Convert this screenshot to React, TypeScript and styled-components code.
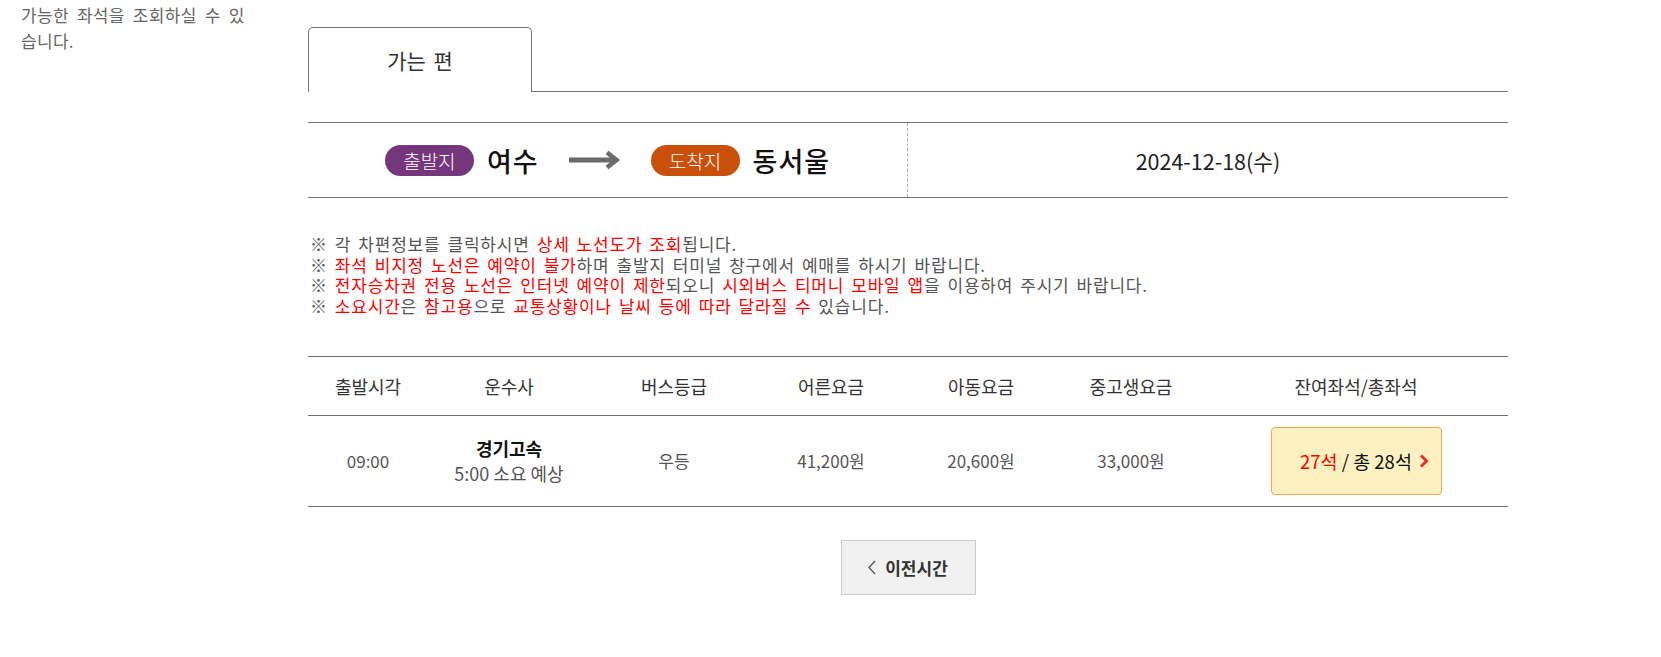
import styled, { createGlobalStyle } from 'styled-components'

const GlobalStyle = createGlobalStyle`
  body {
    margin: 0;
    background: #fff;
    font-family: 'Noto Sans CJK KR', 'Noto Sans', sans-serif;
    color: #333;
  }
`

const Page = styled.div`
  display: flex;
  align-items: flex-start;
`

const Sidebar = styled.div`
  width: 308px;
  flex: 0 0 308px;
  box-sizing: border-box;
  padding: 2px 0 0 21px;
  font-size: 17px;
  line-height: 26px;
  letter-spacing: 0.3px;
  word-spacing: 4px;
  color: #666;
`

const Main = styled.div`
  width: 1200px;
  padding-top: 27px;
`

const TabBar = styled.div`
  display: flex;
  border-bottom: 1px solid #777;
`

const Tab = styled.div`
  width: 224px;
  height: 65px;
  box-sizing: border-box;
  margin-bottom: -1px;
  border: 1px solid #777;
  border-bottom: none;
  border-radius: 5px 5px 0 0;
  background: #fff;
  display: flex;
  align-items: center;
  justify-content: center;
  font-size: 21px;
  color: #333;
  word-spacing: 3px;
`

const RouteBox = styled.div`
  margin-top: 30px;
  height: 76px;
  box-sizing: border-box;
  display: flex;
  border-top: 1px solid #777;
  border-bottom: 1px solid #777;
`

const RouteHalf = styled.div`
  flex: 0 0 599px;
  border-right: 1px dashed #aaa;
  display: flex;
  align-items: center;
  justify-content: center;
`

const DateHalf = styled.div`
  flex: 1;
  display: flex;
  align-items: center;
  justify-content: center;
  font-size: 21.5px;
  color: #222;
`

const Badge = styled.span<{ $color: string }>`
  width: 89px;
  height: 31px;
  border-radius: 16px;
  background: ${p => p.$color};
  color: #fff;
  font-size: 19px;
  font-weight: 300;
  display: flex;
  align-items: center;
  justify-content: center;
`

const City = styled.span`
  margin-left: 13px;
  font-size: 27px;
  font-weight: 500;
  color: #111;
  letter-spacing: 1px;
`

const ArrowWrap = styled.span`
  display: flex;
  margin: 0 30px 0 30px;
`

const Notice = styled.div`
  margin-top: 36px;
  font-size: 17px;
  line-height: 20.7px;
  letter-spacing: 0.8px;
  word-spacing: 2.4px;
  color: #555;
  padding-left: 2px;
`

const Red = styled.span`
  color: #f00;
`

const Mark = styled.span`
  color: #555;
  font-weight: 700;
`

const Table = styled.table`
  margin-top: 39px;
  width: 1200px;
  border-collapse: collapse;
  table-layout: fixed;
  border-top: 1px solid #6f6f6f;
  border-bottom: 1px solid #6f6f6f;
`

const HeadCell = styled.th`
  height: 58px;
  padding: 0;
  font-size: 18px;
  font-weight: 400;
  color: #333;
  text-align: center;
  border-bottom: 1px solid #6f6f6f;
`

const Cell = styled.td`
  height: 90px;
  padding: 0;
  font-size: 17px;
  color: #555;
  text-align: center;
  vertical-align: middle;
`

const Company = styled.div`
  font-size: 18px;
  font-weight: 700;
  color: #111;
  line-height: 25px;
`

const Duration = styled.div`
  font-size: 18px;
  line-height: 25px;
  color: #555;
`

const SeatButton = styled.button`
  position: relative;
  width: 171px;
  height: 68px;
  border: 1px solid #f3a64c;
  border-radius: 4px;
  background: #fdf0c1;
  font-family: inherit;
  font-size: 18.5px;
  color: #111;
  cursor: pointer;
  padding: 0;
`

const SeatChevron = styled.span`
  position: absolute;
  right: 12px;
  top: 50%;
  transform: translateY(-50%);
  display: flex;
`

const Footer = styled.div`
  display: flex;
  justify-content: center;
  margin-top: 33px;
`

const PrevButton = styled.button`
  width: 135px;
  height: 55px;
  border: 1px solid #ccc;
  background: #f1f1f1;
  display: flex;
  align-items: center;
  justify-content: center;
  gap: 9px;
  font-family: inherit;
  font-size: 17px;
  font-weight: 700;
  color: #333;
  cursor: pointer;
`

const columns = [
  { title: '출발시각', width: 120 },
  { title: '운수사', width: 162 },
  { title: '버스등급', width: 168 },
  { title: '어른요금', width: 146 },
  { title: '아동요금', width: 154 },
  { title: '중고생요금', width: 146 },
  { title: '잔여좌석/총좌석', width: 304 },
]

const RouteArrow = () => (
  <svg width='52' height='20' viewBox='0 0 52 20'>
    <path d='M0 10H47' stroke='#6a6a6a' strokeWidth='5' />
    <path d='M38 2.5L47.5 10L38 17.5' fill='none' stroke='#6a6a6a' strokeWidth='4.5' />
  </svg>
)

const App = () => {
  return (
    <>
      <GlobalStyle />
      <Page>
        <Sidebar>
          가능한 좌석을 조회하실 수 있<br />
          습니다.
        </Sidebar>

        <Main>
          <TabBar>
            <Tab>가는 편</Tab>
          </TabBar>

          <RouteBox>
            <RouteHalf>
              <Badge $color='#76367c'>출발지</Badge>
              <City>여수</City>
              <ArrowWrap>
                <RouteArrow />
              </ArrowWrap>
              <Badge $color='#c9500a'>도착지</Badge>
              <City>동서울</City>
            </RouteHalf>
            <DateHalf>2024-12-18(수)</DateHalf>
          </RouteBox>

          <Notice>
            <div>
              <Mark>※</Mark> 각 차편정보를 클릭하시면 <Red>상세 노선도가 조회</Red>됩니다.
            </div>
            <div>
              <Mark>※</Mark> <Red>좌석 비지정 노선은 예약이 불가</Red>하며 출발지 터미널 창구에서 예매를 하시기 바랍니다.
            </div>
            <div>
              <Mark>※</Mark> <Red>전자승차권 전용 노선은 인터넷 예약이 제한</Red>되오니 <Red>시외버스 티머니 모바일 앱</Red>을 이용하여 주시기 바랍니다.
            </div>
            <div>
              <Mark>※</Mark> <Red>소요시간</Red>은 <Red>참고용</Red>으로 <Red>교통상황이나 날씨 등에 따라 달라질 수</Red> 있습니다.
            </div>
          </Notice>

          <Table>
            <colgroup>
              {columns.map(c => (
                <col key={c.title} style={{ width: c.width }} />
              ))}
            </colgroup>
            <thead>
              <tr>
                {columns.map(c => (
                  <HeadCell key={c.title}>{c.title}</HeadCell>
                ))}
              </tr>
            </thead>
            <tbody>
              <tr>
                <Cell>09:00</Cell>
                <Cell>
                  <Company>경기고속</Company>
                  <Duration>5:00 소요 예상</Duration>
                </Cell>
                <Cell>우등</Cell>
                <Cell>41,200원</Cell>
                <Cell>20,600원</Cell>
                <Cell>33,000원</Cell>
                <Cell>
                  <SeatButton>
                    <Red>27석</Red> / 총 28석
                    <SeatChevron>
                      <svg width='10' height='14' viewBox='0 0 10 14'>
                        <path d='M2 1.5L7.5 7L2 12.5' fill='none' stroke='#e8312f' strokeWidth='3' />
                      </svg>
                    </SeatChevron>
                  </SeatButton>
                </Cell>
              </tr>
            </tbody>
          </Table>

          <Footer>
            <PrevButton>
              <svg width='8' height='15' viewBox='0 0 8 15'>
                <path d='M7 1L1 7.5L7 14' fill='none' stroke='#555' strokeWidth='1.3' />
              </svg>
              이전시간
            </PrevButton>
          </Footer>
        </Main>
      </Page>
    </>
  )
}

export default App
